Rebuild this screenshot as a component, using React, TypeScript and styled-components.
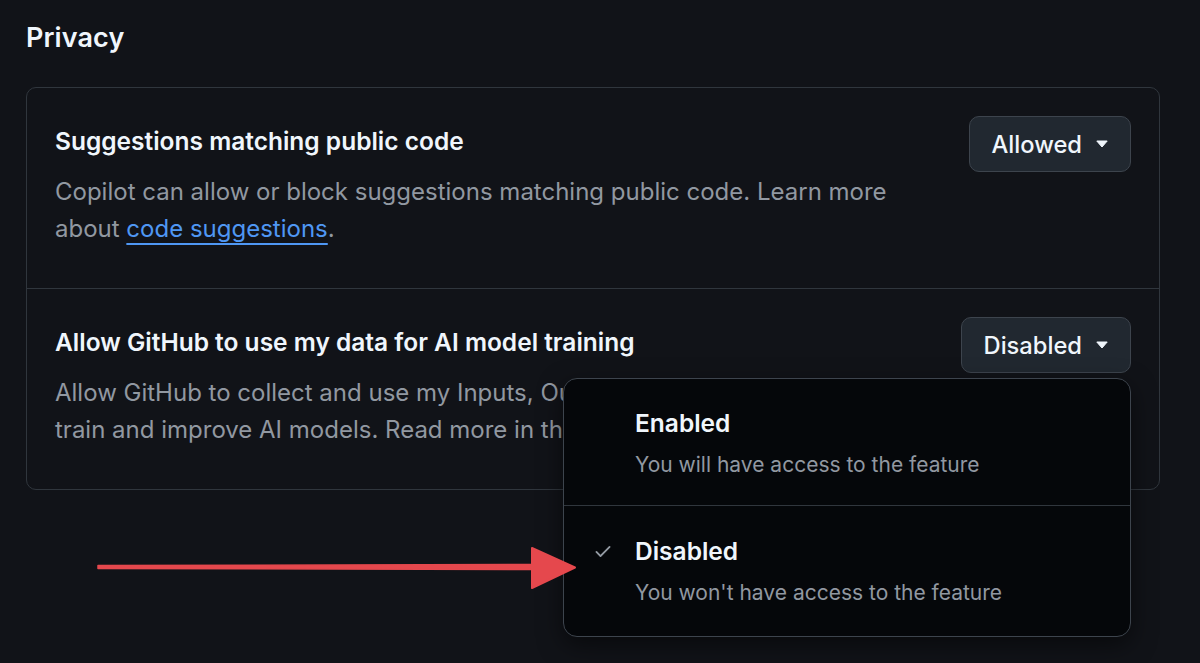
import React from "react";
import styled, { createGlobalStyle } from "styled-components";

// Styles
const GlobalStyle = createGlobalStyle`
  html, body {
    margin: 0;
    padding: 0;
    background: #111318;
  }
  body {
    font-family: Inter, "Noto Sans", "Liberation Sans", sans-serif;
    color: #f0f6fc;
  }
`;

const Page = styled.div`
  position: relative;
  width: 1200px;
  height: 663px;
  padding: 18px 40px 0 26px;
  box-sizing: border-box;
  overflow: hidden;
`;

const Heading = styled.h2`
  margin: 0;
  font-size: 27px;
  line-height: 40px;
  font-weight: 600;
  letter-spacing: 0.1px;
`;

const SettingsBox = styled.div`
  margin-top: 29px;
  border: 1px solid #30363d;
  border-radius: 10px;
`;

const SettingRow = styled.div<{ $last?: boolean }>`
  position: relative;
  display: flex;
  justify-content: space-between;
  align-items: flex-start;
  gap: 40px;
  padding: 28px;
  border-bottom: ${(p) => (p.$last ? "none" : "1px solid #30363d")};
`;

const SettingText = styled.div`
  padding: 7px 0 13px 0;
  max-width: 860px;
`;

const SettingTitle = styled.div`
  font-size: 24.5px;
  line-height: 37px;
  font-weight: 600;
  margin-bottom: 13px;
`;

const SettingDesc = styled.div`
  font-size: 24px;
  line-height: 37px;
  color: #9198a1;
  white-space: nowrap;

  a {
    color: #4f97f3;
    text-decoration: underline;
    text-underline-offset: 6px;
    text-decoration-thickness: 1.5px;
  }
`;

const SelectButton = styled.button`
  display: flex;
  align-items: center;
  gap: 14px;
  height: 56px;
  padding: 0 22px;
  flex-shrink: 0;
  background: #212830;
  border: 1px solid #3d444d;
  border-radius: 10px;
  color: #f0f6fc;
  font-family: inherit;
  font-size: 23.7px;
  font-weight: 500;
`;

const Menu = styled.div`
  position: absolute;
  top: 89px;
  right: 28px;
  width: 566px;
  background: #05070a;
  border: 1px solid #3d444d;
  border-radius: 14px;
  box-shadow: 0 8px 24px rgba(0, 0, 0, 0.5);
  overflow: hidden;
  z-index: 2;
`;

const MenuItem = styled.div<{ $divided?: boolean }>`
  position: relative;
  height: ${(p) => (p.$divided ? "127px" : "130px")};
  padding: ${(p) => (p.$divided ? "23px" : "24px")} 0 0 71px;
  box-sizing: border-box;
  border-bottom: ${(p) => (p.$divided ? "1px solid #30363d" : "none")};
`;

const MenuTitle = styled.div`
  font-size: 24.5px;
  line-height: 42px;
  font-weight: 600;
`;

const MenuDesc = styled.div`
  font-size: 21px;
  line-height: 42px;
  color: #9198a1;
`;

const CheckMark = styled.svg`
  position: absolute;
  left: 29px;
  top: 35px;
`;

const Arrow = styled.svg`
  position: absolute;
  left: 94px;
  top: 544px;
  z-index: 3;
`;

// Icons
const Caret = () => (
  <svg width="12" height="8" viewBox="0 0 12 8">
    <path d="M0.8 1 L11.2 1 L6 7 Z" fill="#f0f6fc" stroke="#f0f6fc" strokeWidth="1" strokeLinejoin="round" />
  </svg>
);

// Component
const App: React.FC = () => {
  return (
    <Page>
      <GlobalStyle />
      <Heading>Privacy</Heading>
      <SettingsBox>
        <SettingRow>
          <SettingText>
            <SettingTitle>Suggestions matching public code</SettingTitle>
            <SettingDesc>
              Copilot can allow or block suggestions matching public code. Learn more
              <br />
              about <a href="#">code suggestions</a>.
            </SettingDesc>
          </SettingText>
          <SelectButton>
            Allowed
            <Caret />
          </SelectButton>
        </SettingRow>
        <SettingRow $last>
          <SettingText>
            <SettingTitle>Allow GitHub to use my data for AI model training</SettingTitle>
            <SettingDesc>
              Allow GitHub to collect and use my Inputs, Outputs, and associated context to
              <br />
              train and improve AI models. Read more in the Privacy Statement.
            </SettingDesc>
          </SettingText>
          <SelectButton>
            Disabled
            <Caret />
          </SelectButton>
          <Menu>
            <MenuItem $divided>
              <MenuTitle>Enabled</MenuTitle>
              <MenuDesc>You will have access to the feature</MenuDesc>
            </MenuItem>
            <MenuItem>
              <CheckMark width="20" height="20" viewBox="0 0 16 16" fill="#9198a1">
                <path d="M13.78 4.22a.75.75 0 0 1 0 1.06l-7.25 7.25a.75.75 0 0 1-1.06 0L2.22 9.28a.751.751 0 0 1 .018-1.042.751.751 0 0 1 1.042-.018L6 10.94l6.72-6.72a.75.75 0 0 1 1.06 0Z" />
              </CheckMark>
              <MenuTitle>Disabled</MenuTitle>
              <MenuDesc>You won't have access to the feature</MenuDesc>
            </MenuItem>
          </Menu>
        </SettingRow>
      </SettingsBox>
      <Arrow width="484" height="48" viewBox="0 0 484 48">
        <path d="M4 21.5 L440 20.5 L440 25.5 L4 24.5 Z" fill="#e5484d" stroke="#e5484d" strokeWidth="1.5" strokeLinejoin="round" />
        <path d="M438 4 L481 23.5 L438 44 Z" fill="#e5484d" stroke="#e5484d" strokeWidth="2" strokeLinejoin="round" />
      </Arrow>
    </Page>
  );
};

export default App;
